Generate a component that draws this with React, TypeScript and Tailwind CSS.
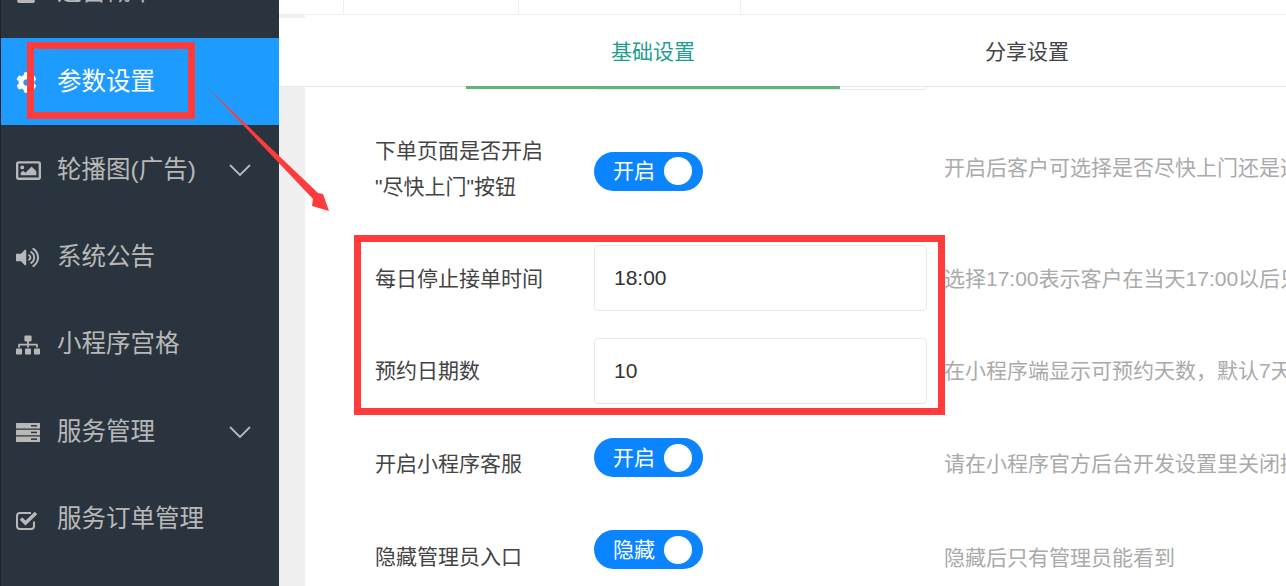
import type { ReactNode } from "react";
import {
  FaCog,
  FaLock,
  FaRegImage,
  FaSitemap,
  FaVolumeUp,
} from "react-icons/fa";

const ServerIcon = () => (
  <svg width="24" height="19" viewBox="0 0 24 19" fill="currentColor">
    <rect x="0" y="0" width="24" height="5.500" rx="0.500" />
    <rect x="0" y="6.700" width="24" height="5.500" rx="0.500" />
    <rect x="0" y="13.400" width="24" height="5.500" rx="0.500" />
    <rect x="15" y="2" width="6" height="1.500" fill="#2a343f" />
    <rect x="15" y="8.700" width="6" height="1.500" fill="#2a343f" />
    <rect x="15" y="15.400" width="6" height="1.500" fill="#2a343f" />
  </svg>
);

const CheckIcon = () => (
  <svg width="22" height="20" viewBox="0 0 22 20" fill="none">
    <path
      d="M18 11.500V16a3 3 0 0 1-3 3H4a3 3 0 0 1-3-3V6a3 3 0 0 1 3-3h11"
      stroke="currentColor"
      strokeWidth="2"
    />
    <path
      d="M5 8.500l4.500 4.500L20 3"
      stroke="currentColor"
      strokeWidth="3.500"
    />
  </svg>
);

const Chevron = () => (
  <svg width="22" height="12" viewBox="0 0 22 12" fill="none">
    <path d="M1 1l10 10L21 1" stroke="currentColor" strokeWidth="1.800" />
  </svg>
);

const menu = [
  {
    label: "运营概率",
    icon: <FaLock className="text-[20px]" />,
    cls: "-mt-[90px] mb-[2.6px]",
  },
  {
    label: "参数设置",
    icon: <FaCog className="text-[21px]" />,
    cls: "bg-[#1e9bff] text-white",
  },
  {
    label: "轮播图(广告)",
    icon: <FaRegImage className="text-[25px]" />,
    arrow: true,
  },
  { label: "系统公告", icon: <FaVolumeUp className="text-[23px]" /> },
  { label: "小程序宫格", icon: <FaSitemap className="text-[24px]" /> },
  { label: "服务管理", icon: <ServerIcon />, arrow: true },
  { label: "服务订单管理", icon: <CheckIcon /> },
];

const Switch = ({ text }: { text: string }) => (
  <div className="flex h-[39px] w-[109px] items-center justify-between rounded-full bg-[#0a84ff] pl-[19px] pr-[11px] text-[21px] text-white">
    <span>{text}</span>
    <span className="h-[28px] w-[28px] rounded-full bg-white"></span>
  </div>
);

const Input = ({ value }: { value: string }) => (
  <div className="flex h-[66px] w-[333px] items-center rounded border border-[#e8e8e8] pl-[19px] text-[21px] text-[#333]">
    {value}
  </div>
);

type RowProps = {
  label: ReactNode;
  hint: string;
  children: ReactNode;
  className: string;
  labelClass?: string;
  controlClass?: string;
  hintClass?: string;
};

const Row = ({
  label,
  hint,
  children,
  className,
  labelClass,
  controlClass,
  hintClass,
}: RowProps) => (
  <div className={`flex items-center whitespace-nowrap ${className}`}>
    <div
      className={`w-[219px] shrink-0 text-[21px] leading-[36px] text-[#444] ${labelClass ?? ""}`}
    >
      {label}
    </div>
    <div className={`w-[333px] shrink-0 ${controlClass ?? ""}`}>{children}</div>
    <div className={`ml-[17px] text-[21px] text-[#aaa] ${hintClass ?? ""}`}>
      {hint}
    </div>
  </div>
);

export default function App() {
  return (
    <div className="relative flex h-[586px] w-[1286px] overflow-hidden bg-[#f0f0f0] font-['Liberation_Sans','Noto_Sans_CJK_SC',sans-serif]">
      <aside className="flex h-full w-[279px] shrink-0 flex-col border-l border-[#1c232b] bg-[#2a343f] pt-[38px] text-[24.5px] text-[#b8b8b8]">
        {menu.map((item) => (
          <div
            key={item.label}
            className={`flex h-[87.4px] shrink-0 items-center pl-[15px] pr-[28px] pt-[2px] ${item.cls ?? ""}`}
          >
            <span className="flex w-[41px]">{item.icon}</span>
            <span className="flex-1">{item.label}</span>
            {item.arrow && <Chevron />}
          </div>
        ))}
      </aside>

      <main className="flex min-w-0 flex-1 flex-col">
        <div className="flex h-[15px] shrink-0 border-b border-[#eee] bg-white">
          <div className="ml-[64px] w-[175px] border-l border-[#eee]"></div>
          <div className="w-[223px] border-x border-[#eee]"></div>
        </div>
        <div className="relative flex h-[72px] shrink-0 items-center border-b border-[#e6e6e6] bg-white pt-[2px] text-[21px]">
          <div className="absolute left-0 top-0 h-[3px] w-[26px] bg-[#f0f0f0]"></div>
          <span className="ml-[332px] text-[#1fa08f]">基础设置</span>
          <span className="ml-[290px] text-[#444]">分享设置</span>
        </div>
        <div className="ml-[26px] flex-1 bg-white pl-[70px]">
          <div className="relative z-10 -mt-[1px] ml-[91px] h-[3px] w-[374px] bg-[#5cb874]"></div>
          <div className="-mt-[3px] ml-[220px] h-[4px] w-[332px] rounded-b border border-t-0 border-[#e8e8e8]"></div>
          <Row
            className="mt-[44px] h-[72px]"
            labelClass="mb-[2px] leading-[35px]"
            controlClass="mt-[2px]"
            hintClass="mb-[4px]"
            label={
              <>
                下单页面是否开启
                <br />
                "尽快上门"按钮
              </>
            }
            hint="开启后客户可选择是否尽快上门还是选择预约时间"
          >
            <Switch text="开启" />
          </Row>
          <Row
            className="mt-[39px] h-[66px]"
            labelClass="mt-[2px]"
            hintClass="mt-[2px]"
            label="每日停止接单时间"
            hint="选择17:00表示客户在当天17:00以后只能预约第二天"
          >
            <Input value="18:00" />
          </Row>
          <Row
            className="mt-[27px] h-[66px]"
            label="预约日期数"
            hint="在小程序端显示可预约天数，默认7天"
          >
            <Input value="10" />
          </Row>
          <Row
            className="mt-[34px] h-[39px]"
            labelClass="mt-[12px]"
            hintClass="mt-[12px]"
            label="开启小程序客服"
            hint="请在小程序官方后台开发设置里关闭接收消息推送"
          >
            <Switch text="开启" />
          </Row>
          <Row
            className="mt-[53px] h-[39px]"
            labelClass="mt-[14px]"
            hintClass="mt-[16px]"
            label="隐藏管理员入口"
            hint="隐藏后只有管理员能看到"
          >
            <Switch text="隐藏" />
          </Row>
        </div>
      </main>

      <div className="absolute left-[27px] top-[42px] h-[77px] w-[168px] border-[7px] border-[#ff3b3b]"></div>
      <div className="absolute left-[354px] top-[235px] h-[180px] w-[591px] border-[7px] border-[#ff3b3b]"></div>
      <svg
        className="absolute left-[200px] top-[80px]"
        width="135"
        height="135"
        viewBox="0 0 135 135"
      >
        <polygon
          points="7,7 118,113 123,114 129,131 112,126 113,119"
          fill="#ff3b3b"
        />
      </svg>
    </div>
  );
}
